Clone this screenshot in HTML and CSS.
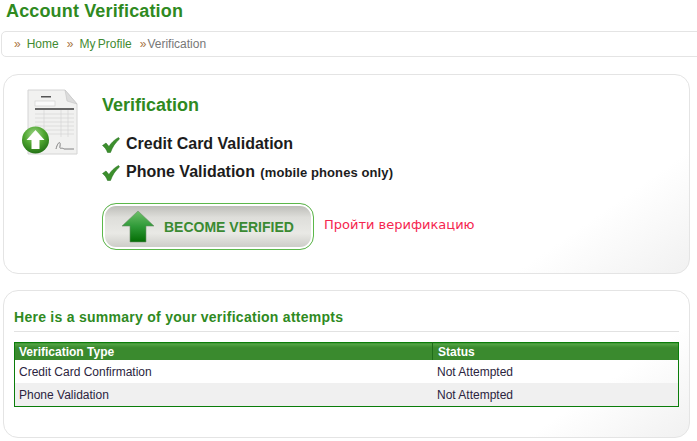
FILE: index.html
```html
<!DOCTYPE html>
<html lang="en">
<head>
    <meta charset="UTF-8">
    <title>Account Verification</title>
    <link rel="stylesheet" href="styles.css">
</head>
<body>
    <h1 class="page-title">Account Verification</h1>

    <!-- Breadcrumb -->
    <div class="breadcrumb">
        <span class="sep">»</span><a class="crumb">Home</a>
        <span class="sep">»</span><a class="crumb">My Profile</a>
        <span class="sep sep-last">»</span><span class="crumb-current">Verification</span>
    </div>

    <!-- Verification card -->
    <section class="card card-verify">
        <div class="doc-icon">
            <svg width="58" height="68" viewBox="0 0 58 68">
                <defs>
                    <radialGradient id="ball" cx="45%" cy="30%" r="75%">
                        <stop offset="0" stop-color="#9fd68a"/>
                        <stop offset="0.5" stop-color="#4ea52f"/>
                        <stop offset="1" stop-color="#1d6a12"/>
                    </radialGradient>
                </defs>
                <path d="M7 1H44L56 15V65H7Z" fill="#f1f1f0" stroke="#d4d4d4"/>
                <path d="M44 1L46 12L56 15Z" fill="#dcdcdc" stroke="#c4c4c4" stroke-width="0.6"/>
                <rect x="20" y="7" width="10" height="1.500" fill="#555"/>
                <rect x="14" y="12" width="20" height="5" fill="#fafafa" stroke="#ccc" stroke-width="0.6"/>
                <rect x="14" y="19" width="39" height="2" fill="#666"/>
                <path d="M14 25H53M14 29H53M14 33H53M14 37H53M14 41H53M14 45H53M23 21V48M40 21V48M47 21V48" stroke="#d4d4d4" stroke-width="0.7" fill="none"/>
                <path d="M35 60C37 52 40 52 39 57C38 61 41 58 43 60H53" stroke="#777" stroke-width="0.9" fill="none"/>
                <circle cx="14.500" cy="51" r="13.500" fill="url(#ball)"/>
                <path d="M14.500 41L23.500 51H18.500V60H10.500V51H5.500Z" fill="#fff"/>
            </svg>
        </div>
        <div class="verify-body">
            <h2 class="verify-title">Verification</h2>
            <ul class="check-list">
                <li class="check-item">
                    <svg class="check" width="18" height="16" viewBox="0 0 18 16"><path d="M0.500 8.500L4 6L7 9.500C9 6 12 3 16.500 0.500L17.500 2C13 6 10.500 10 8.500 15.500H5.500C4.500 12.500 3 10.500 0.500 8.500Z" fill="#3c8f2c" stroke="#1f6a18" stroke-width="0.5"/></svg>
                    <span>Credit Card Validation</span>
                </li>
                <li class="check-item">
                    <svg class="check" width="18" height="16" viewBox="0 0 18 16"><path d="M0.500 8.500L4 6L7 9.500C9 6 12 3 16.500 0.500L17.500 2C13 6 10.500 10 8.500 15.500H5.500C4.500 12.500 3 10.500 0.500 8.500Z" fill="#3c8f2c" stroke="#1f6a18" stroke-width="0.5"/></svg>
                    <span>Phone Validation <small class="note">(mobile phones only)</small></span>
                </li>
            </ul>
            <div class="action-row">
                <a class="btn-verify">
                    <svg width="34" height="34" viewBox="0 0 34 34">
                        <defs>
                            <linearGradient id="arrow" x1="0" y1="0" x2="0" y2="1">
                                <stop offset="0" stop-color="#6fc06a"/>
                                <stop offset="0.5" stop-color="#2f9a38"/>
                                <stop offset="1" stop-color="#046d04"/>
                            </linearGradient>
                        </defs>
                        <path d="M17 1L33 16H25V32H9V16H1Z" fill="url(#arrow)" stroke="#6d8f6a" stroke-width="0.6"/>
                    </svg>
                    <span>BECOME VERIFIED</span>
                </a>
                <span class="russian-note">Пройти верификацию</span>
            </div>
        </div>
    </section>

    <!-- Summary card -->
    <section class="card card-summary">
        <h3 class="summary-title">Here is a summary of your verification attempts</h3>
        <table class="attempts">
            <thead>
                <tr><th class="col-type">Verification Type</th><th class="col-status">Status</th></tr>
            </thead>
            <tbody>
                <tr><td>Credit Card Confirmation</td><td class="col-status">Not Attempted</td></tr>
                <tr class="row-alt"><td>Phone Validation</td><td class="col-status">Not Attempted</td></tr>
            </tbody>
        </table>
    </section>
</body>
</html>
```

FILE: styles.css
```css
html, body {
    height: 441px;
    overflow: hidden;
}
body {
    margin: 0;
    background: #fff;
    font-family: "Liberation Sans", Arial, sans-serif;
    color: #222;
}
.page-title {
    margin: 0;
    padding: 1px 0 0 6px;
    height: 30px;
    font-size: 18px;
    line-height: 21px;
    color: #2f8a1f;
    letter-spacing: 0.15px;
}
.breadcrumb {
    margin: 0 -12px 17px 1px;
    height: 24px;
    padding-left: 12px;
    border: 1px solid #e4e4e4;
    border-radius: 5px;
    font-size: 12px;
    line-height: 24px;
    word-spacing: -1px;
    display: flex;
}
.sep {
    color: #a9753f;
    margin-right: 6px;
}
.crumb {
    color: #3f8a32;
    margin-right: 8px;
}
.sep-last {
    margin-right: 1px;
}
.crumb-current {
    color: #777;
}
.card {
    margin-left: 3px;
    width: 685px;
    border: 1px solid #e4e4e4;
    border-radius: 15px;
    background: linear-gradient(145deg, #fff 82%, #f1f1f1 100%);
}
.card-verify {
    height: 198px;
    margin-bottom: 16px;
    display: flex;
}
.doc-icon {
    width: 98px;
    padding: 14px 0 0 17px;
    box-sizing: border-box;
}
.verify-title {
    margin: 20px 0 0;
    font-size: 18px;
    line-height: 21px;
    color: #2f8a1f;
}
.check-list {
    list-style: none;
    margin: 14px 0 0;
    padding: 0;
}
.check-item {
    display: flex;
    align-items: center;
    height: 28px;
    font-size: 16px;
    font-weight: bold;
    color: #1c1c1c;
}
.check {
    margin: 2px 6px 0 0;
}
.note {
    font-size: 13px;
    margin-left: 1px;
    letter-spacing: 0.1px;
}
.action-row {
    margin-top: 17px;
    display: flex;
    align-items: center;
}
.btn-verify {
    width: 192px;
    height: 45px;
    border: 1px solid #5cb84a;
    border-radius: 14px;
    background: linear-gradient(#b9b9b4, #dededa 30%, #e9e9e5 65%, #c9c9c4);
    box-shadow: inset 0 0 0 2px #fff;
    display: flex;
    align-items: center;
    padding-left: 18px;
    color: #3a8a32;
    font-size: 14px;
    font-weight: bold;
}
.btn-verify span {
    margin-left: 9px;
}
.russian-note {
    margin-left: 10px;
    margin-top: -4px;
    font-family: "DejaVu Sans", sans-serif;
    font-size: 13px;
    color: #f5264f;
}
.card-summary {
    height: 146px;
    padding: 0 10px;
    width: 665px;
}
.summary-title {
    margin: 18px 0 10px;
    padding-bottom: 6px;
    height: 16px;
    border-bottom: 1px solid #e2e2e2;
    font-size: 14px;
    line-height: 16px;
    letter-spacing: 0.27px;
    color: #2f8a1f;
}
.attempts {
    width: 665px;
    border-collapse: collapse;
    border: 1px solid #0a7d0a;
    font-size: 12px;
}
.attempts th {
    height: 17px;
    padding: 2px 4px 0;
    background: linear-gradient(#56a848 0, #3a8a2e 4px);
    color: #fff;
    text-align: left;
    line-height: 15px;
    box-sizing: border-box;
}
.col-type {
    width: 418px;
    border-right: 1px solid #1f6d1a;
}
.attempts td {
    height: 23px;
    padding: 0 4px;
    color: #2b2440;
}
.attempts .col-status {
    padding-left: 4.500px;
}
.attempts th.col-status {
    padding-left: 5px;
}
.row-alt {
    background: #f0f0f0;
}
```
